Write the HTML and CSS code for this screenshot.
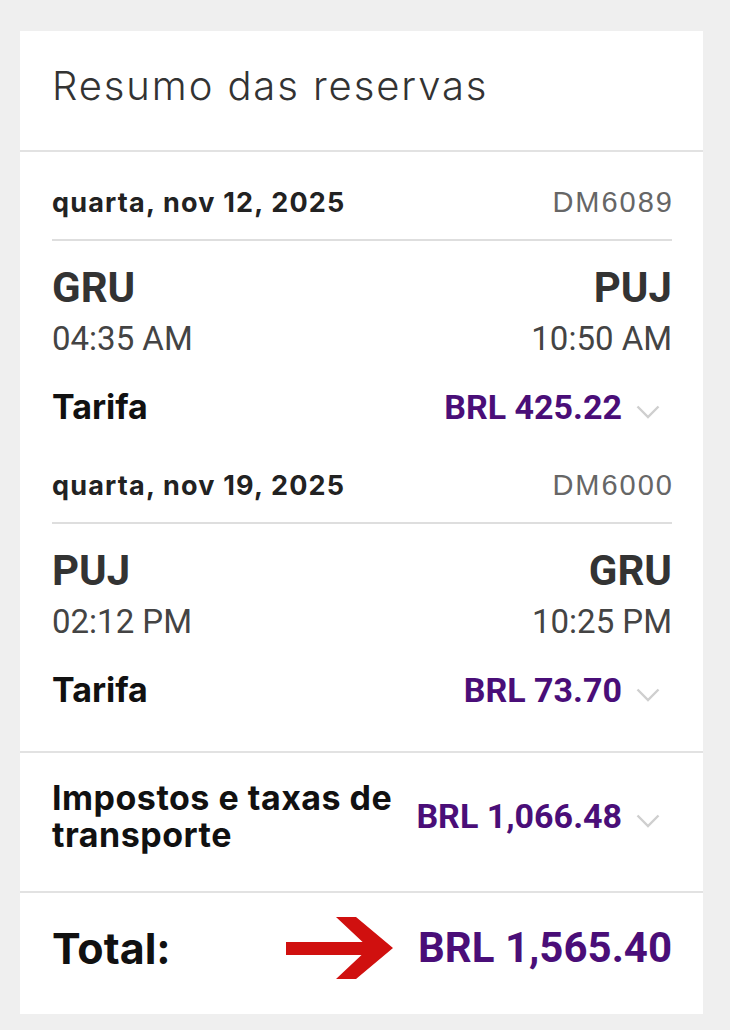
FILE: index.html
```html
<!DOCTYPE html>
<html lang="pt">
<head>
    <meta charset="UTF-8">
    <meta name="viewport" content="width=device-width, initial-scale=1.0">
    <title>Resumo das reservas</title>
    <link rel="stylesheet" href="styles.css">
</head>
<body>
    <div class="summary">
        <div class="summary-head">
            <h1>Resumo das reservas</h1>
        </div>

        <div class="flights">
            <div class="flight">
                <div class="date-row">
                    <span class="date">quarta, nov 12, 2025</span>
                    <span class="flight-no">DM6089</span>
                </div>
                <div class="route">
                    <div class="stop">
                        <div class="code">GRU</div>
                        <div class="time">04:35 AM</div>
                    </div>
                    <div class="stop stop-end">
                        <div class="code">PUJ</div>
                        <div class="time">10:50 AM</div>
                    </div>
                </div>
                <div class="line-item">
                    <span class="label">Tarifa</span>
                    <span class="amount">BRL 425.22</span>
                    <span class="chevron"><svg width="24" height="14" viewBox="0 0 24 14"><path d="M1.5 1.5 L12 12 L22.5 1.5" fill="none" stroke="#cfcfcf" stroke-width="2.4"/></svg></span>
                </div>
            </div>

            <div class="flight">
                <div class="date-row">
                    <span class="date">quarta, nov 19, 2025</span>
                    <span class="flight-no">DM6000</span>
                </div>
                <div class="route">
                    <div class="stop">
                        <div class="code">PUJ</div>
                        <div class="time">02:12 PM</div>
                    </div>
                    <div class="stop stop-end">
                        <div class="code">GRU</div>
                        <div class="time">10:25 PM</div>
                    </div>
                </div>
                <div class="line-item">
                    <span class="label">Tarifa</span>
                    <span class="amount">BRL 73.70</span>
                    <span class="chevron"><svg width="24" height="14" viewBox="0 0 24 14"><path d="M1.5 1.5 L12 12 L22.5 1.5" fill="none" stroke="#cfcfcf" stroke-width="2.4"/></svg></span>
                </div>
            </div>
        </div>

        <div class="taxes">
            <div class="line-item">
                <span class="label label-wrap">Impostos e taxas de transporte</span>
                <span class="amount">BRL 1,066.48</span>
                <span class="chevron"><svg width="24" height="14" viewBox="0 0 24 14"><path d="M1.5 1.5 L12 12 L22.5 1.5" fill="none" stroke="#cfcfcf" stroke-width="2.4"/></svg></span>
            </div>
        </div>

        <div class="total">
            <span class="total-label">Total:</span>
            <svg class="arrow" width="107" height="62" viewBox="0 0 107 62">
                <rect x="0" y="25" width="88" height="13" fill="#d0100f"/>
                <polygon points="50,0 70,0 107,31 70,62 50,62 83,31" fill="#d0100f"/>
            </svg>
            <span class="total-amount">BRL 1,565.40</span>
        </div>
    </div>
</body>
</html>
```

FILE: styles.css
```css
body {
    margin: 0;
    padding: 31px 27px 17px 20px;
    background: #efefef;
    font-family: Inter, "Noto Sans", sans-serif;
}
.summary {
    background: #fff;
}
.summary-head {
    height: 121px;
    box-sizing: border-box;
    padding: 31px 31px 0 32px;
    border-bottom: 2px solid #e2e2e2;
}
.summary-head h1 {
    margin: 0;
    font-size: 40px;
    line-height: 48px;
    font-weight: 300;
    letter-spacing: 1.9px;
    color: #333;
}
.flights {
    padding: 0 31px 41px 32px;
    border-bottom: 2px solid #e2e2e2;
}
.flight {
    padding-top: 35px;
}
.flight + .flight {
    padding-top: 43px;
}
.date-row {
    display: flex;
    justify-content: space-between;
    align-items: baseline;
    padding-bottom: 21px;
    border-bottom: 2px solid #dedede;
}
.date {
    font-size: 27px;
    line-height: 30px;
    font-weight: 700;
    letter-spacing: 1.2px;
    color: #222;
}
.flight-no {
    font-family: "Liberation Sans", Arial, sans-serif;
    font-size: 29px;
    line-height: 30px;
    letter-spacing: 2px;
    margin-right: -2px;
    color: #666;
}
.route {
    display: flex;
    justify-content: space-between;
    margin-top: 25px;
}
.stop-end {
    text-align: right;
}
.code {
    font-family: Roboto, sans-serif;
    font-size: 42px;
    line-height: 44px;
    font-weight: 700;
    color: #333;
}
.time {
    margin-top: 9px;
    font-family: Roboto, sans-serif;
    font-size: 33px;
    line-height: 40px;
    color: #444;
}
.line-item {
    display: flex;
    align-items: center;
    margin-top: 28px;
}
.label {
    flex: 1;
    font-size: 34px;
    line-height: 40px;
    font-weight: 700;
    color: #111;
}
.amount {
    font-family: Roboto, sans-serif;
    font-size: 34px;
    line-height: 40px;
    font-weight: 700;
    color: #4a0e78;
}
.chevron {
    width: 50px;
    padding-left: 14px;
    box-sizing: border-box;
    display: flex;
    align-items: center;
    padding-top: 10px;
}
.taxes {
    padding: 26px 31px 38px 32px;
    border-bottom: 2px solid #e2e2e2;
}
.taxes .line-item {
    margin-top: 0;
}
.label-wrap {
    line-height: 37px;
    letter-spacing: 0.5px;
    padding-right: 20px;
}
.total {
    display: flex;
    align-items: center;
    padding: 24px 31px 35px 32px;
}
.total-label {
    flex: 1;
    font-size: 43px;
    line-height: 50px;
    font-weight: 700;
    color: #111;
}
.arrow {
    margin-right: 25px;
}
.total-amount {
    font-family: Roboto, sans-serif;
    font-size: 42px;
    line-height: 50px;
    font-weight: 700;
    color: #4a0e78;
}
```
